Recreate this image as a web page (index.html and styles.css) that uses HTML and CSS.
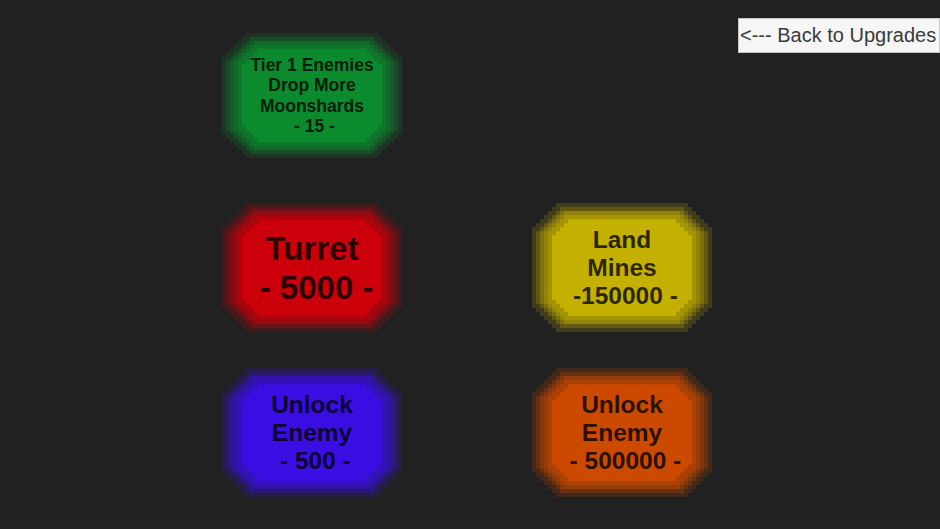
FILE: index.html
```html
<!DOCTYPE html>
<html>
<head>
<meta charset="utf-8">
<link rel="stylesheet" href="styles.css">
</head>
<body>
<svg class="defs" width="0" height="0" aria-hidden="true">
  <symbol id="oct" viewBox="0 0 45 32" preserveAspectRatio="none">
    <path fill="currentColor" fill-opacity="0.2" d="M7,0H38h1v1h1v1h1v1h1v1h1v1h1v1h1v1V25v1h-1v1h-1v1h-1v1h-1v1h-1v1h-1v1h-1H7h-1v-1h-1v-1h-1v-1h-1v-1h-1v-1h-1v-1h-1v-1V7v-1h1v-1h1v-1h1v-1h1v-1h1v-1h1v-1h1Z"/>
    <path fill="currentColor" fill-opacity="0.25" d="M8,1H37h1v1h1v1h1v1h1v1h1v1h1v1h1v1V24v1h-1v1h-1v1h-1v1h-1v1h-1v1h-1v1h-1H8h-1v-1h-1v-1h-1v-1h-1v-1h-1v-1h-1v-1h-1v-1V8v-1h1v-1h1v-1h1v-1h1v-1h1v-1h1v-1h1Z"/>
    <path fill="currentColor" fill-opacity="0.28" d="M8,2H37h1v1h1v1h1v1h1v1h1v1h1v1V24v1h-1v1h-1v1h-1v1h-1v1h-1v1h-1H8h-1v-1h-1v-1h-1v-1h-1v-1h-1v-1h-1v-1V8v-1h1v-1h1v-1h1v-1h1v-1h1v-1h1Z"/>
    <path fill="currentColor" fill-opacity="0.3" d="M9,2H36h1v1h1v1h1v1h1v1h1v1h1v1V24v1h-1v1h-1v1h-1v1h-1v1h-1v1h-1H9h-1v-1h-1v-1h-1v-1h-1v-1h-1v-1h-1v-1V8v-1h1v-1h1v-1h1v-1h1v-1h1v-1h1Z"/>
    <path fill="currentColor" fill-opacity="0.35" d="M9,3H36h1v1h1v1h1v1h1v1h1v1V24v1h-1v1h-1v1h-1v1h-1v1h-1H9h-1v-1h-1v-1h-1v-1h-1v-1h-1v-1V8v-1h1v-1h1v-1h1v-1h1v-1h1Z"/>
    <path fill="currentColor" fill-opacity="1" d="M10,4H35h1v1h1v1h1v1h1v1h1v1V23v1h-1v1h-1v1h-1v1h-1v1h-1H10h-1v-1h-1v-1h-1v-1h-1v-1h-1v-1V9v-1h1v-1h1v-1h1v-1h1v-1h1Z"/>
  </symbol>
</svg>

<div class="back">&lt;--- Back to Upgrades</div>

<main class="grid">
  <div class="upg green r1 c1">
    <svg class="bg"><use href="#oct" width="100%" height="100%"/></svg>
    <div class="label small">Tier 1 Enemies<br>Drop More<br>Moonshards<br>&nbsp;- 15 -</div>
  </div>

  <div class="upg red r2 c1">
    <svg class="bg"><use href="#oct" width="100%" height="100%"/></svg>
    <div class="label big">Turret<br>&nbsp;- 5000 -</div>
  </div>

  <div class="upg yellow r2 c2">
    <svg class="bg"><use href="#oct" width="100%" height="100%"/></svg>
    <div class="label mid">Land<br>Mines<br>&nbsp;-150000 -</div>
  </div>

  <div class="upg blue r3 c1">
    <svg class="bg"><use href="#oct" width="100%" height="100%"/></svg>
    <div class="label mid">Unlock<br>Enemy<br>&nbsp;- 500 -</div>
  </div>

  <div class="upg orange r3 c2">
    <svg class="bg"><use href="#oct" width="100%" height="100%"/></svg>
    <div class="label mid">Unlock<br>Enemy<br>&nbsp;- 500000 -</div>
  </div>
</main>
</body>
</html>
```

FILE: styles.css
```css
html, body {
  margin: 0;
  padding: 0;
  width: 940px;
  height: 529px;
  overflow: hidden;
  background: #212121;
  font-family: "Liberation Sans", Arial, sans-serif;
}

.defs {
  position: absolute;
  width: 0;
  height: 0;
}

.back {
  position: absolute;
  top: 18px;
  left: 738px;
  width: 202px;
  height: 35px;
  box-sizing: border-box;
  background: #f6f6f6;
  border: 1px solid #c8c8c8;
  color: #3a3a3a;
  font-size: 20px;
  line-height: 32px;
  white-space: nowrap;
  padding-left: 1px;
}

.grid {
  display: grid;
  grid-template-columns: 180px 180px;
  grid-template-rows: 170px 165px 129px;
  column-gap: 130px;
  padding: 33px 0 0 222px;
}

.r1 { grid-row: 1; height: 125px; }
.r2 { grid-row: 2; height: 129px; }
.r3 { grid-row: 3; height: 129px; }
.c1 { grid-column: 1; }
.c2 { grid-column: 2; }

.upg {
  display: grid;
  width: 180px;
  align-self: start;
}

.upg > * {
  grid-area: 1 / 1;
}

.bg {
  width: 180px;
  height: 100%;
  display: block;
}

.label {
  align-self: center;
  justify-self: center;
  text-align: center;
  font-weight: bold;
  color: rgba(0, 0, 0, 0.8);
  white-space: nowrap;
}

.small { font-size: 17.5px; line-height: 20.5px; }
.mid   { font-size: 24.5px; line-height: 28px; }
.big   { font-size: 33px; line-height: 39px; }

.green  { color: #0b8a2e; }
.red    { color: #cc000a; }
.yellow { color: #c4b000; }
.blue   { color: #3a0ee2; }
.orange { color: #cc4a00; }
```
